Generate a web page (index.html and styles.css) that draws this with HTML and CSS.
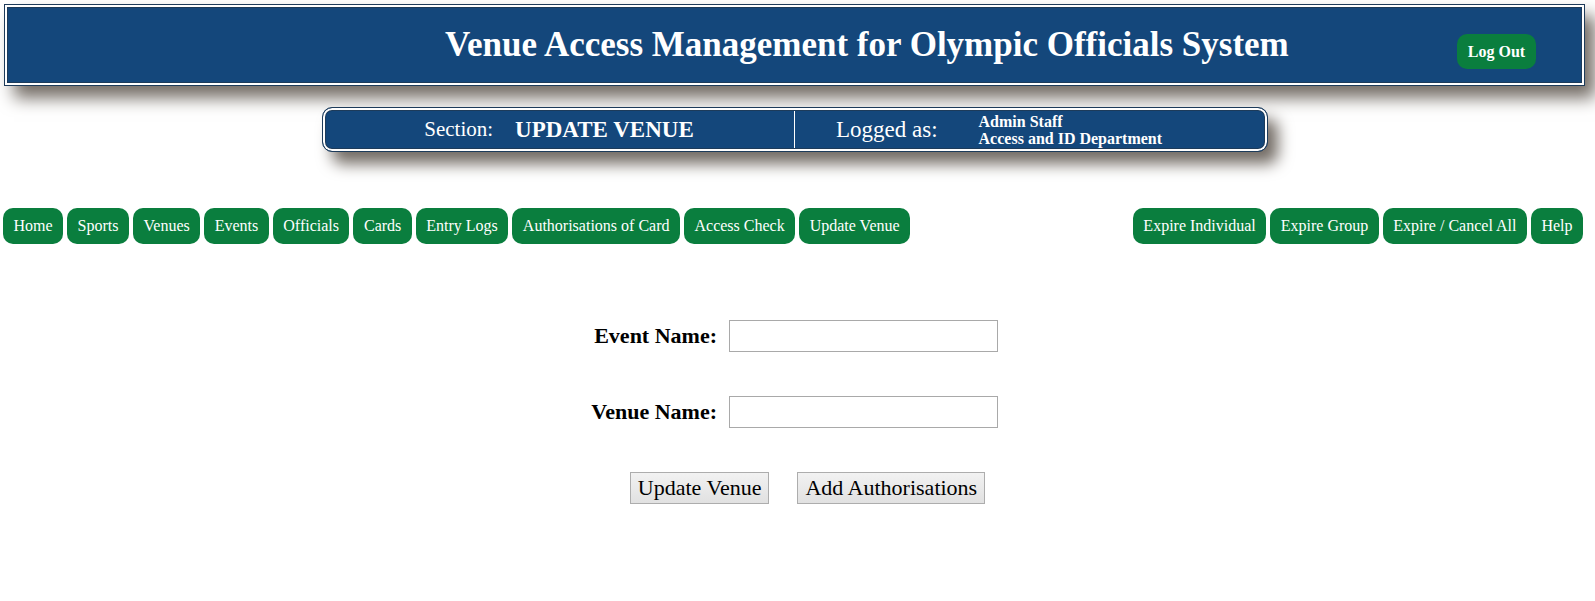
FILE: index.html
```html
<!DOCTYPE html>
<html>
<head>
<meta charset="utf-8">
<title>Venue Access Management for Olympic Officials System</title>
<link rel="stylesheet" href="styles.css">
</head>
<body>
<header class="masthead">
  <h1 class="title">Venue Access Management for Olympic Officials System</h1>
  <a class="logout" href="#">Log Out</a>
</header>

<div class="status-wrap">
  <div class="status">
    <div class="status-cell section-cell">
      <span class="section-label">Section:</span>
      <span class="value">UPDATE VENUE</span>
    </div>
    <div class="status-cell user-cell">
      <span class="label">Logged as:</span>
      <span class="user">Admin Staff<br>Access and ID Department</span>
    </div>
  </div>
</div>

<nav class="nav">
  <div class="nav-group">
    <a class="nav-btn" href="#">Home</a>
    <a class="nav-btn" href="#">Sports</a>
    <a class="nav-btn" href="#">Venues</a>
    <a class="nav-btn" href="#">Events</a>
    <a class="nav-btn" href="#">Officials</a>
    <a class="nav-btn" href="#">Cards</a>
    <a class="nav-btn" href="#">Entry Logs</a>
    <a class="nav-btn" href="#">Authorisations of Card</a>
    <a class="nav-btn" href="#">Access Check</a>
    <a class="nav-btn" href="#">Update Venue</a>
  </div>
  <div class="nav-group">
    <a class="nav-btn" href="#">Expire Individual</a>
    <a class="nav-btn" href="#">Expire Group</a>
    <a class="nav-btn" href="#">Expire / Cancel All</a>
    <a class="nav-btn" href="#">Help</a>
  </div>
</nav>

<form class="form">
  <div class="field">
    <label class="field-label" for="event">Event Name:</label>
    <input class="field-input" id="event" type="text">
  </div>
  <div class="field">
    <label class="field-label" for="venue">Venue Name:</label>
    <input class="field-input" id="venue" type="text">
  </div>
  <div class="actions">
    <button class="btn" type="button">Update Venue</button>
    <button class="btn" type="button">Add Authorisations</button>
  </div>
</form>
</body>
</html>
```

FILE: styles.css
```css
html, body {
  margin: 0;
  padding: 0;
  background: #ffffff;
}

body {
  font-family: "Liberation Serif", "Times New Roman", serif;
  color: #000;
}

.masthead {
  margin: 4px 10px 0 4px;
  height: 82px;
  box-sizing: border-box;
  background: #14477b;
  border: 1px solid #1d3b5a;
  box-shadow: inset 0 0 0 2px #ffffff, inset 0 0 0 3px #1d3b5a, 10px 12px 16px #746d66;
  display: flex;
  align-items: center;
  padding-left: 440px;
  padding-right: 48px;
}

.title {
  margin: 0;
  color: #fff;
  font-size: 35px;
  font-weight: bold;
  white-space: nowrap;
}

.logout {
  margin-left: auto;
  margin-top: 13px;
  background: #0a7e3e;
  color: #fff;
  font-weight: bold;
  font-size: 16px;
  text-decoration: none;
  height: 35px;
  width: 79px;
  border-radius: 10px;
  display: flex;
  align-items: center;
  justify-content: center;
}

.status-wrap {
  display: flex;
  justify-content: center;
  padding-right: 5px;
  margin-top: 21px;
}

.status {
  width: 946px;
  height: 45px;
  box-sizing: border-box;
  background: #14477b;
  border: 1px solid #1d3b5a;
  border-radius: 10px;
  box-shadow: inset 0 0 0 2px #ffffff, inset 0 0 0 3px #1d3b5a, 10px 12px 15px #746d66;
  display: grid;
  grid-template-columns: 1fr 1fr;
  color: #fff;
  padding: 3px;
}

.status-cell {
  display: flex;
  align-items: center;
  min-width: 0;
}

.section-cell {
  justify-content: center;
  border-right: 1px solid #ffffff;
  gap: 22px;
  padding-right: 2px;
}

.user-cell {
  padding-left: 41px;
  gap: 41px;
}

.section-label {
  font-size: 21px;
}

.label {
  font-size: 23px;
}

.value {
  font-size: 23px;
  font-weight: bold;
}

.user {
  font-size: 16px;
  font-weight: bold;
  line-height: 17px;
}

.nav {
  margin-top: 56px;
  display: flex;
  justify-content: space-between;
  padding: 0 12px 0 3px;
}

.nav-group {
  display: flex;
  gap: 4px;
}

.nav-btn {
  background: #0a7e3e;
  color: #fff;
  text-decoration: none;
  font-size: 16px;
  height: 36px;
  padding: 0 10.5px;
  border-radius: 10px;
  display: flex;
  align-items: center;
}

.form {
  margin-top: 76px;
  display: flex;
  flex-direction: column;
  align-items: center;
  padding-right: 10px;
}

.field {
  display: flex;
  align-items: center;
  gap: 12px;
  height: 32px;
  margin-bottom: 44px;
}

.field-label {
  width: 130px;
  text-align: right;
  font-weight: bold;
  font-size: 22px;
}

.field-input {
  width: 269px;
  height: 32px;
  box-sizing: border-box;
  border: 1px solid #a9a9a9;
  font-family: inherit;
  font-size: 16px;
  padding: 2px 4px;
  margin: 0;
}

.actions {
  display: flex;
  gap: 28px;
  padding-left: 30px;
}

.btn {
  font-family: "Liberation Serif", "Times New Roman", serif;
  font-size: 22px;
  height: 32px;
  padding: 0 7px;
  color: #000;
  border: 1px solid #adadad;
  border-radius: 0;
  background: linear-gradient(#f2f2f2, #e1e1e1);
  margin: 0;
}
```
